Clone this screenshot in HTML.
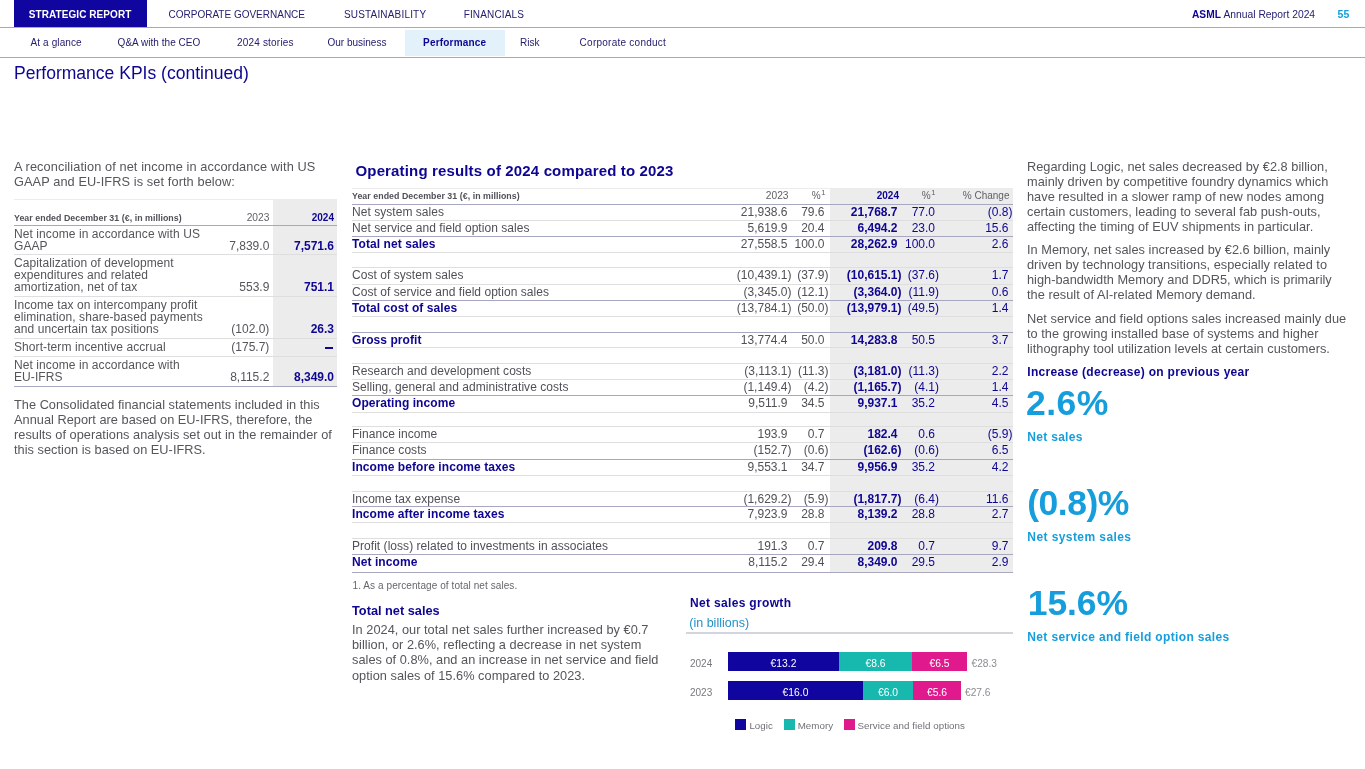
<!DOCTYPE html>
<html><head><meta charset="utf-8"><style>
html,body{margin:0;padding:0;background:#ffffff;}
body{width:1365px;height:769px;position:relative;overflow:hidden;font-family:"Liberation Sans",sans-serif;-webkit-font-smoothing:antialiased;}
#w{position:absolute;left:0;top:0;width:1365px;height:769px;will-change:transform;}
.t{position:absolute;white-space:nowrap;}
.r{position:absolute;}
sup{font-size:7.5px;vertical-align:0;position:relative;top:-4px;margin-left:0.6px;}
</style></head><body><div id="w">
<div class="r" style="left:14px;top:0px;width:133px;height:27px;background:#10069f;"></div>
<div class="t" style="top:8.54px;font-size:10px;line-height:12px;color:#ffffff;font-weight:700;letter-spacing:0.08px;left:28.7px;">STRATEGIC REPORT</div>
<div class="r" style="left:0px;top:27px;width:1365px;height:1px;background:#a8a7c0;"></div>
<div class="t" style="top:8.54px;font-size:10px;line-height:12px;color:#252070;left:168.5px;">CORPORATE GOVERNANCE</div>
<div class="t" style="top:8.54px;font-size:10px;line-height:12px;color:#252070;letter-spacing:0.18px;left:343.90000000000003px;">SUSTAINABILITY</div>
<div class="t" style="top:8.54px;font-size:10px;line-height:12px;color:#252070;letter-spacing:0.15px;left:463.7px;">FINANCIALS</div>
<div class="t" style="top:9.17px;font-size:10.2px;line-height:12px;color:#0e0592;font-weight:700;left:1192px;">ASML</div>
<div class="t" style="top:9.13px;font-size:10.3px;line-height:12px;color:#252070;left:1223.5px;">Annual Report 2024</div>
<div class="t" style="top:7.86px;font-size:10.5px;line-height:13px;color:#159edb;font-weight:700;left:1337.6px;">55</div>
<div class="r" style="left:405px;top:30px;width:100px;height:26px;background:#e3f1fa;"></div>
<div class="t" style="top:36.53px;font-size:10px;line-height:12px;color:#252070;letter-spacing:0.1px;left:30.6px;">At a glance</div>
<div class="t" style="top:36.53px;font-size:10px;line-height:12px;color:#252070;letter-spacing:0.03px;left:117.6px;">Q&amp;A with the CEO</div>
<div class="t" style="top:36.53px;font-size:10px;line-height:12px;color:#252070;letter-spacing:0.2px;left:236.9px;">2024 stories</div>
<div class="t" style="top:36.53px;font-size:10px;line-height:12px;color:#252070;left:327.5px;">Our business</div>
<div class="t" style="top:36.53px;font-size:10px;line-height:12px;color:#0e0592;font-weight:700;letter-spacing:0.18px;left:423.1px;">Performance</div>
<div class="t" style="top:36.53px;font-size:10px;line-height:12px;color:#252070;left:520.0px;">Risk</div>
<div class="t" style="top:36.53px;font-size:10px;line-height:12px;color:#252070;letter-spacing:0.25px;left:579.5999999999999px;">Corporate conduct</div>
<div class="r" style="left:0px;top:57px;width:1365px;height:1px;background:#a8a7c0;"></div>
<div class="t" style="top:63.42px;font-size:17.55px;line-height:21px;color:#0e0592;left:14px;">Performance KPIs (continued)</div>
<div class="t" style="left:14px;top:159.28px;font-size:12.75px;line-height:15px;color:#55555b;letter-spacing:0.1px;">A reconciliation of net income in accordance with US<br>GAAP and EU-IFRS is set forth below:</div>
<div class="r" style="left:273px;top:200px;width:64px;height:186px;background:#ececec;"></div>
<div class="r" style="left:14px;top:199px;width:323px;height:1px;background:#ececec;"></div>
<div class="t" style="top:212.85px;font-size:8.8px;line-height:11px;color:#505058;font-weight:700;letter-spacing:0.05px;left:14px;">Year ended December 31 (€, in millions)</div>
<div class="t" style="top:211.87px;font-size:10.2px;line-height:12px;color:#606068;right:1095.7px;text-align:right;">2023</div>
<div class="t" style="top:211.94px;font-size:10px;line-height:12px;color:#0e0592;font-weight:700;right:1031px;text-align:right;">2024</div>
<div class="r" style="left:14px;top:225px;width:323px;height:1px;background:#a8a7c0;"></div>
<div class="t" style="left:14px;top:227.94px;font-size:12px;line-height:12px;color:#55555b;letter-spacing:0.08px;">Net income in accordance with US<br>GAAP</div>
<div class="t" style="top:238.94px;font-size:12px;line-height:14px;color:#55555b;right:1095.7px;text-align:right;">7,839.0</div>
<div class="t" style="top:238.94px;font-size:12px;line-height:14px;color:#0e0592;font-weight:700;right:1031px;text-align:right;">7,571.6</div>
<div class="r" style="left:14px;top:254px;width:323px;height:1px;background:#dedede;"></div>
<div class="t" style="left:14px;top:256.94px;font-size:12px;line-height:12px;color:#55555b;letter-spacing:0.08px;">Capitalization of development<br>expenditures and related<br>amortization, net of tax</div>
<div class="t" style="top:279.94px;font-size:12px;line-height:14px;color:#55555b;right:1095.7px;text-align:right;">553.9</div>
<div class="t" style="top:279.94px;font-size:12px;line-height:14px;color:#0e0592;font-weight:700;right:1031px;text-align:right;">751.1</div>
<div class="r" style="left:14px;top:296px;width:323px;height:1px;background:#dedede;"></div>
<div class="t" style="left:14px;top:298.94px;font-size:12px;line-height:12px;color:#55555b;letter-spacing:0.08px;">Income tax on intercompany profit<br>elimination, share-based payments<br>and uncertain tax positions</div>
<div class="t" style="top:321.94px;font-size:12px;line-height:14px;color:#55555b;right:1095.7px;text-align:right;">(102.0)</div>
<div class="t" style="top:321.94px;font-size:12px;line-height:14px;color:#0e0592;font-weight:700;right:1031px;text-align:right;">26.3</div>
<div class="r" style="left:14px;top:338px;width:323px;height:1px;background:#dedede;"></div>
<div class="t" style="left:14px;top:340.94px;font-size:12px;line-height:12px;color:#55555b;letter-spacing:0.08px;">Short-term incentive accrual</div>
<div class="t" style="top:339.94px;font-size:12px;line-height:14px;color:#55555b;right:1095.7px;text-align:right;">(175.7)</div>
<div class="r" style="left:324.5px;top:347px;width:8.5px;height:2px;background:#0e0592;"></div>
<div class="r" style="left:14px;top:356px;width:323px;height:1px;background:#dedede;"></div>
<div class="t" style="left:14px;top:358.94px;font-size:12px;line-height:12px;color:#55555b;letter-spacing:0.08px;">Net income in accordance with<br>EU-IFRS</div>
<div class="t" style="top:369.94px;font-size:12px;line-height:14px;color:#55555b;right:1095.7px;text-align:right;">8,115.2</div>
<div class="t" style="top:369.94px;font-size:12px;line-height:14px;color:#0e0592;font-weight:700;right:1031px;text-align:right;">8,349.0</div>
<div class="r" style="left:14px;top:386px;width:323px;height:1px;background:#a8a7c0;"></div>
<div class="t" style="left:14px;top:396.78px;font-size:12.75px;line-height:15px;color:#55555b;letter-spacing:0.03px;">The Consolidated financial statements included in this<br>Annual Report are based on EU-IFRS, therefore, the<br>results of operations analysis set out in the remainder of<br>this section is based on EU-IFRS.</div>
<div class="t" style="top:161.60px;font-size:15px;line-height:18px;color:#0e0592;font-weight:700;letter-spacing:0.15px;left:355.5px;">Operating results of 2024 compared to 2023</div>
<div class="r" style="left:830px;top:188px;width:183px;height:384px;background:#ececec;"></div>
<div class="r" style="left:352px;top:188px;width:661px;height:1px;background:#ececec;"></div>
<div class="t" style="top:190.85px;font-size:8.8px;line-height:11px;color:#505058;font-weight:700;letter-spacing:0.05px;left:352px;">Year ended December 31 (€, in millions)</div>
<div class="t" style="top:189.87px;font-size:10.2px;line-height:12px;color:#606068;right:576.5px;text-align:right;">2023</div>
<div class="t" style="top:189.94px;font-size:10px;line-height:12px;color:#606068;right:539.5px;text-align:right;">%<sup>1</sup></div>
<div class="t" style="top:189.94px;font-size:10px;line-height:12px;color:#0e0592;font-weight:700;right:466px;text-align:right;">2024</div>
<div class="t" style="top:189.94px;font-size:10px;line-height:12px;color:#606068;right:429.5px;text-align:right;">%<sup>1</sup></div>
<div class="t" style="top:189.94px;font-size:10px;line-height:12px;color:#606068;right:355.5px;text-align:right;">% Change</div>
<div class="r" style="left:352px;top:204px;width:661px;height:1px;background:#a8a7c0;"></div>
<div class="t" style="top:204.74px;font-size:12px;line-height:14px;color:#505058;letter-spacing:0.04px;left:352px;">Net system sales</div>
<div class="t" style="top:204.74px;font-size:12px;line-height:14px;color:#505058;right:577.5px;text-align:right;">21,938.6</div>
<div class="t" style="top:204.74px;font-size:12px;line-height:14px;color:#505058;right:540.5px;text-align:right;">79.6</div>
<div class="t" style="top:204.74px;font-size:12px;line-height:14px;color:#0e0592;font-weight:700;right:467.5px;text-align:right;">21,768.7</div>
<div class="t" style="top:204.74px;font-size:12px;line-height:14px;color:#0e0592;right:430px;text-align:right;">77.0</div>
<div class="t" style="top:204.74px;font-size:12px;line-height:14px;color:#0e0592;right:356.5px;text-align:right;">(0.8<span style="position:absolute">)</span></div>
<div class="r" style="left:352px;top:220px;width:661px;height:1px;background:#dedede;"></div>
<div class="t" style="top:220.74px;font-size:12px;line-height:14px;color:#505058;letter-spacing:0.04px;left:352px;">Net service and field option sales</div>
<div class="t" style="top:220.74px;font-size:12px;line-height:14px;color:#505058;right:577.5px;text-align:right;">5,619.9</div>
<div class="t" style="top:220.74px;font-size:12px;line-height:14px;color:#505058;right:540.5px;text-align:right;">20.4</div>
<div class="t" style="top:220.74px;font-size:12px;line-height:14px;color:#0e0592;font-weight:700;right:467.5px;text-align:right;">6,494.2</div>
<div class="t" style="top:220.74px;font-size:12px;line-height:14px;color:#0e0592;right:430px;text-align:right;">23.0</div>
<div class="t" style="top:220.74px;font-size:12px;line-height:14px;color:#0e0592;right:356.5px;text-align:right;">15.6</div>
<div class="r" style="left:352px;top:236px;width:661px;height:1px;background:#a8a7c0;"></div>
<div class="t" style="top:236.74px;font-size:12px;line-height:14px;color:#0e0592;font-weight:700;letter-spacing:0.07px;left:352px;">Total net sales</div>
<div class="t" style="top:236.74px;font-size:12px;line-height:14px;color:#505058;right:577.5px;text-align:right;">27,558.5</div>
<div class="t" style="top:236.74px;font-size:12px;line-height:14px;color:#505058;right:540.5px;text-align:right;">100.0</div>
<div class="t" style="top:236.74px;font-size:12px;line-height:14px;color:#0e0592;font-weight:700;right:467.5px;text-align:right;">28,262.9</div>
<div class="t" style="top:236.74px;font-size:12px;line-height:14px;color:#0e0592;right:430px;text-align:right;">100.0</div>
<div class="t" style="top:236.74px;font-size:12px;line-height:14px;color:#0e0592;right:356.5px;text-align:right;">2.6</div>
<div class="r" style="left:352px;top:252px;width:661px;height:1px;background:#dedede;"></div>
<div class="r" style="left:352px;top:267px;width:661px;height:1px;background:#dedede;"></div>
<div class="t" style="top:267.74px;font-size:12px;line-height:14px;color:#505058;letter-spacing:0.04px;left:352px;">Cost of system sales</div>
<div class="t" style="top:267.74px;font-size:12px;line-height:14px;color:#505058;right:577.5px;text-align:right;">(10,439.1<span style="position:absolute">)</span></div>
<div class="t" style="top:267.74px;font-size:12px;line-height:14px;color:#505058;right:540.5px;text-align:right;">(37.9<span style="position:absolute">)</span></div>
<div class="t" style="top:267.74px;font-size:12px;line-height:14px;color:#0e0592;font-weight:700;right:467.5px;text-align:right;">(10,615.1<span style="position:absolute">)</span></div>
<div class="t" style="top:267.74px;font-size:12px;line-height:14px;color:#0e0592;right:430px;text-align:right;">(37.6<span style="position:absolute">)</span></div>
<div class="t" style="top:267.74px;font-size:12px;line-height:14px;color:#0e0592;right:356.5px;text-align:right;">1.7</div>
<div class="r" style="left:352px;top:284px;width:661px;height:1px;background:#dedede;"></div>
<div class="t" style="top:284.74px;font-size:12px;line-height:14px;color:#505058;letter-spacing:0.04px;left:352px;">Cost of service and field option sales</div>
<div class="t" style="top:284.74px;font-size:12px;line-height:14px;color:#505058;right:577.5px;text-align:right;">(3,345.0<span style="position:absolute">)</span></div>
<div class="t" style="top:284.74px;font-size:12px;line-height:14px;color:#505058;right:540.5px;text-align:right;">(12.1<span style="position:absolute">)</span></div>
<div class="t" style="top:284.74px;font-size:12px;line-height:14px;color:#0e0592;font-weight:700;right:467.5px;text-align:right;">(3,364.0<span style="position:absolute">)</span></div>
<div class="t" style="top:284.74px;font-size:12px;line-height:14px;color:#0e0592;right:430px;text-align:right;">(11.9<span style="position:absolute">)</span></div>
<div class="t" style="top:284.74px;font-size:12px;line-height:14px;color:#0e0592;right:356.5px;text-align:right;">0.6</div>
<div class="r" style="left:352px;top:300px;width:661px;height:1px;background:#a8a7c0;"></div>
<div class="t" style="top:300.74px;font-size:12px;line-height:14px;color:#0e0592;font-weight:700;letter-spacing:0.07px;left:352px;">Total cost of sales</div>
<div class="t" style="top:300.74px;font-size:12px;line-height:14px;color:#505058;right:577.5px;text-align:right;">(13,784.1<span style="position:absolute">)</span></div>
<div class="t" style="top:300.74px;font-size:12px;line-height:14px;color:#505058;right:540.5px;text-align:right;">(50.0<span style="position:absolute">)</span></div>
<div class="t" style="top:300.74px;font-size:12px;line-height:14px;color:#0e0592;font-weight:700;right:467.5px;text-align:right;">(13,979.1<span style="position:absolute">)</span></div>
<div class="t" style="top:300.74px;font-size:12px;line-height:14px;color:#0e0592;right:430px;text-align:right;">(49.5<span style="position:absolute">)</span></div>
<div class="t" style="top:300.74px;font-size:12px;line-height:14px;color:#0e0592;right:356.5px;text-align:right;">1.4</div>
<div class="r" style="left:352px;top:316px;width:661px;height:1px;background:#dedede;"></div>
<div class="r" style="left:352px;top:332px;width:661px;height:1px;background:#a8a7c0;"></div>
<div class="t" style="top:332.74px;font-size:12px;line-height:14px;color:#0e0592;font-weight:700;letter-spacing:0.07px;left:352px;">Gross profit</div>
<div class="t" style="top:332.74px;font-size:12px;line-height:14px;color:#505058;right:577.5px;text-align:right;">13,774.4</div>
<div class="t" style="top:332.74px;font-size:12px;line-height:14px;color:#505058;right:540.5px;text-align:right;">50.0</div>
<div class="t" style="top:332.74px;font-size:12px;line-height:14px;color:#0e0592;font-weight:700;right:467.5px;text-align:right;">14,283.8</div>
<div class="t" style="top:332.74px;font-size:12px;line-height:14px;color:#0e0592;right:430px;text-align:right;">50.5</div>
<div class="t" style="top:332.74px;font-size:12px;line-height:14px;color:#0e0592;right:356.5px;text-align:right;">3.7</div>
<div class="r" style="left:352px;top:347px;width:661px;height:1px;background:#dedede;"></div>
<div class="r" style="left:352px;top:363px;width:661px;height:1px;background:#dedede;"></div>
<div class="t" style="top:363.74px;font-size:12px;line-height:14px;color:#505058;letter-spacing:0.04px;left:352px;">Research and development costs</div>
<div class="t" style="top:363.74px;font-size:12px;line-height:14px;color:#505058;right:577.5px;text-align:right;">(3,113.1<span style="position:absolute">)</span></div>
<div class="t" style="top:363.74px;font-size:12px;line-height:14px;color:#505058;right:540.5px;text-align:right;">(11.3<span style="position:absolute">)</span></div>
<div class="t" style="top:363.74px;font-size:12px;line-height:14px;color:#0e0592;font-weight:700;right:467.5px;text-align:right;">(3,181.0<span style="position:absolute">)</span></div>
<div class="t" style="top:363.74px;font-size:12px;line-height:14px;color:#0e0592;right:430px;text-align:right;">(11.3<span style="position:absolute">)</span></div>
<div class="t" style="top:363.74px;font-size:12px;line-height:14px;color:#0e0592;right:356.5px;text-align:right;">2.2</div>
<div class="r" style="left:352px;top:379px;width:661px;height:1px;background:#dedede;"></div>
<div class="t" style="top:379.74px;font-size:12px;line-height:14px;color:#505058;letter-spacing:0.04px;left:352px;">Selling, general and administrative costs</div>
<div class="t" style="top:379.74px;font-size:12px;line-height:14px;color:#505058;right:577.5px;text-align:right;">(1,149.4<span style="position:absolute">)</span></div>
<div class="t" style="top:379.74px;font-size:12px;line-height:14px;color:#505058;right:540.5px;text-align:right;">(4.2<span style="position:absolute">)</span></div>
<div class="t" style="top:379.74px;font-size:12px;line-height:14px;color:#0e0592;font-weight:700;right:467.5px;text-align:right;">(1,165.7<span style="position:absolute">)</span></div>
<div class="t" style="top:379.74px;font-size:12px;line-height:14px;color:#0e0592;right:430px;text-align:right;">(4.1<span style="position:absolute">)</span></div>
<div class="t" style="top:379.74px;font-size:12px;line-height:14px;color:#0e0592;right:356.5px;text-align:right;">1.4</div>
<div class="r" style="left:352px;top:395px;width:661px;height:1px;background:#a8a7c0;"></div>
<div class="t" style="top:395.74px;font-size:12px;line-height:14px;color:#0e0592;font-weight:700;letter-spacing:0.07px;left:352px;">Operating income</div>
<div class="t" style="top:395.74px;font-size:12px;line-height:14px;color:#505058;right:577.5px;text-align:right;">9,511.9</div>
<div class="t" style="top:395.74px;font-size:12px;line-height:14px;color:#505058;right:540.5px;text-align:right;">34.5</div>
<div class="t" style="top:395.74px;font-size:12px;line-height:14px;color:#0e0592;font-weight:700;right:467.5px;text-align:right;">9,937.1</div>
<div class="t" style="top:395.74px;font-size:12px;line-height:14px;color:#0e0592;right:430px;text-align:right;">35.2</div>
<div class="t" style="top:395.74px;font-size:12px;line-height:14px;color:#0e0592;right:356.5px;text-align:right;">4.5</div>
<div class="r" style="left:352px;top:412px;width:661px;height:1px;background:#dedede;"></div>
<div class="r" style="left:352px;top:426px;width:661px;height:1px;background:#dedede;"></div>
<div class="t" style="top:426.74px;font-size:12px;line-height:14px;color:#505058;letter-spacing:0.04px;left:352px;">Finance income</div>
<div class="t" style="top:426.74px;font-size:12px;line-height:14px;color:#505058;right:577.5px;text-align:right;">193.9</div>
<div class="t" style="top:426.74px;font-size:12px;line-height:14px;color:#505058;right:540.5px;text-align:right;">0.7</div>
<div class="t" style="top:426.74px;font-size:12px;line-height:14px;color:#0e0592;font-weight:700;right:467.5px;text-align:right;">182.4</div>
<div class="t" style="top:426.74px;font-size:12px;line-height:14px;color:#0e0592;right:430px;text-align:right;">0.6</div>
<div class="t" style="top:426.74px;font-size:12px;line-height:14px;color:#0e0592;right:356.5px;text-align:right;">(5.9<span style="position:absolute">)</span></div>
<div class="r" style="left:352px;top:442px;width:661px;height:1px;background:#dedede;"></div>
<div class="t" style="top:442.74px;font-size:12px;line-height:14px;color:#505058;letter-spacing:0.04px;left:352px;">Finance costs</div>
<div class="t" style="top:442.74px;font-size:12px;line-height:14px;color:#505058;right:577.5px;text-align:right;">(152.7<span style="position:absolute">)</span></div>
<div class="t" style="top:442.74px;font-size:12px;line-height:14px;color:#505058;right:540.5px;text-align:right;">(0.6<span style="position:absolute">)</span></div>
<div class="t" style="top:442.74px;font-size:12px;line-height:14px;color:#0e0592;font-weight:700;right:467.5px;text-align:right;">(162.6<span style="position:absolute">)</span></div>
<div class="t" style="top:442.74px;font-size:12px;line-height:14px;color:#0e0592;right:430px;text-align:right;">(0.6<span style="position:absolute">)</span></div>
<div class="t" style="top:442.74px;font-size:12px;line-height:14px;color:#0e0592;right:356.5px;text-align:right;">6.5</div>
<div class="r" style="left:352px;top:459px;width:661px;height:1px;background:#a8a7c0;"></div>
<div class="t" style="top:459.74px;font-size:12px;line-height:14px;color:#0e0592;font-weight:700;letter-spacing:0.07px;left:352px;">Income before income taxes</div>
<div class="t" style="top:459.74px;font-size:12px;line-height:14px;color:#505058;right:577.5px;text-align:right;">9,553.1</div>
<div class="t" style="top:459.74px;font-size:12px;line-height:14px;color:#505058;right:540.5px;text-align:right;">34.7</div>
<div class="t" style="top:459.74px;font-size:12px;line-height:14px;color:#0e0592;font-weight:700;right:467.5px;text-align:right;">9,956.9</div>
<div class="t" style="top:459.74px;font-size:12px;line-height:14px;color:#0e0592;right:430px;text-align:right;">35.2</div>
<div class="t" style="top:459.74px;font-size:12px;line-height:14px;color:#0e0592;right:356.5px;text-align:right;">4.2</div>
<div class="r" style="left:352px;top:475px;width:661px;height:1px;background:#dedede;"></div>
<div class="r" style="left:352px;top:491px;width:661px;height:1px;background:#dedede;"></div>
<div class="t" style="top:491.74px;font-size:12px;line-height:14px;color:#505058;letter-spacing:0.04px;left:352px;">Income tax expense</div>
<div class="t" style="top:491.74px;font-size:12px;line-height:14px;color:#505058;right:577.5px;text-align:right;">(1,629.2<span style="position:absolute">)</span></div>
<div class="t" style="top:491.74px;font-size:12px;line-height:14px;color:#505058;right:540.5px;text-align:right;">(5.9<span style="position:absolute">)</span></div>
<div class="t" style="top:491.74px;font-size:12px;line-height:14px;color:#0e0592;font-weight:700;right:467.5px;text-align:right;">(1,817.7<span style="position:absolute">)</span></div>
<div class="t" style="top:491.74px;font-size:12px;line-height:14px;color:#0e0592;right:430px;text-align:right;">(6.4<span style="position:absolute">)</span></div>
<div class="t" style="top:491.74px;font-size:12px;line-height:14px;color:#0e0592;right:356.5px;text-align:right;">11.6</div>
<div class="r" style="left:352px;top:506px;width:661px;height:1px;background:#a8a7c0;"></div>
<div class="t" style="top:506.74px;font-size:12px;line-height:14px;color:#0e0592;font-weight:700;letter-spacing:0.07px;left:352px;">Income after income taxes</div>
<div class="t" style="top:506.74px;font-size:12px;line-height:14px;color:#505058;right:577.5px;text-align:right;">7,923.9</div>
<div class="t" style="top:506.74px;font-size:12px;line-height:14px;color:#505058;right:540.5px;text-align:right;">28.8</div>
<div class="t" style="top:506.74px;font-size:12px;line-height:14px;color:#0e0592;font-weight:700;right:467.5px;text-align:right;">8,139.2</div>
<div class="t" style="top:506.74px;font-size:12px;line-height:14px;color:#0e0592;right:430px;text-align:right;">28.8</div>
<div class="t" style="top:506.74px;font-size:12px;line-height:14px;color:#0e0592;right:356.5px;text-align:right;">2.7</div>
<div class="r" style="left:352px;top:522px;width:661px;height:1px;background:#dedede;"></div>
<div class="r" style="left:352px;top:538px;width:661px;height:1px;background:#dedede;"></div>
<div class="t" style="top:538.74px;font-size:12px;line-height:14px;color:#505058;letter-spacing:0.04px;left:352px;">Profit (loss) related to investments in associates</div>
<div class="t" style="top:538.74px;font-size:12px;line-height:14px;color:#505058;right:577.5px;text-align:right;">191.3</div>
<div class="t" style="top:538.74px;font-size:12px;line-height:14px;color:#505058;right:540.5px;text-align:right;">0.7</div>
<div class="t" style="top:538.74px;font-size:12px;line-height:14px;color:#0e0592;font-weight:700;right:467.5px;text-align:right;">209.8</div>
<div class="t" style="top:538.74px;font-size:12px;line-height:14px;color:#0e0592;right:430px;text-align:right;">0.7</div>
<div class="t" style="top:538.74px;font-size:12px;line-height:14px;color:#0e0592;right:356.5px;text-align:right;">9.7</div>
<div class="r" style="left:352px;top:554px;width:661px;height:1px;background:#a8a7c0;"></div>
<div class="t" style="top:555.34px;font-size:12px;line-height:14px;color:#0e0592;font-weight:700;letter-spacing:0.07px;left:352px;">Net income</div>
<div class="t" style="top:555.34px;font-size:12px;line-height:14px;color:#505058;right:577.5px;text-align:right;">8,115.2</div>
<div class="t" style="top:555.34px;font-size:12px;line-height:14px;color:#505058;right:540.5px;text-align:right;">29.4</div>
<div class="t" style="top:555.34px;font-size:12px;line-height:14px;color:#0e0592;font-weight:700;right:467.5px;text-align:right;">8,349.0</div>
<div class="t" style="top:555.34px;font-size:12px;line-height:14px;color:#0e0592;right:430px;text-align:right;">29.5</div>
<div class="t" style="top:555.34px;font-size:12px;line-height:14px;color:#0e0592;right:356.5px;text-align:right;">2.9</div>
<div class="r" style="left:352px;top:572px;width:661px;height:1px;background:#a8a7c0;"></div>
<div class="t" style="top:579.93px;font-size:10px;line-height:12px;color:#66666c;letter-spacing:0.08px;left:352.5px;">1. As a percentage of total net sales.</div>
<div class="t" style="top:603.18px;font-size:12.75px;line-height:15px;color:#0e0592;font-weight:700;left:352px;">Total net sales</div>
<div class="t" style="left:352px;top:621.98px;font-size:12.75px;line-height:15.2px;color:#55555b;letter-spacing:0.03px;">In 2024, our total net sales further increased by €0.7<br>billion, or 2.6%, reflecting a decrease in net system<br>sales of 0.8%, and an increase in net service and field<br>option sales of 15.6% compared to 2023.</div>
<div class="t" style="top:596.24px;font-size:12px;line-height:14px;color:#0e0592;font-weight:700;letter-spacing:0.33px;left:690px;">Net sales growth</div>
<div class="t" style="top:615.77px;font-size:12.5px;line-height:15px;color:#2490c8;left:689.3px;">(in billions)</div>
<div class="r" style="left:686px;top:632px;width:327px;height:2px;background:#d4d4de;"></div>
<div class="t" style="top:658.13px;font-size:10px;line-height:12px;color:#78787e;left:690px;">2024</div>
<div class="t" style="top:686.83px;font-size:10px;line-height:12px;color:#78787e;left:690px;">2023</div>
<div class="r" style="left:728px;top:652px;width:111px;height:19px;background:#10069f;"></div>
<div class="r" style="left:839px;top:652px;width:73px;height:19px;background:#17b8ae;"></div>
<div class="r" style="left:912px;top:652px;width:55px;height:19px;background:#e0198c;"></div>
<div class="r" style="left:728px;top:681px;width:135px;height:19px;background:#10069f;"></div>
<div class="r" style="left:863px;top:681px;width:50px;height:19px;background:#17b8ae;"></div>
<div class="r" style="left:913px;top:681px;width:48px;height:19px;background:#e0198c;"></div>
<div class="t" style="top:657.63px;font-size:10.3px;line-height:12px;color:#ffffff;left:583.5px;width:400px;text-align:center;">€13.2</div>
<div class="t" style="top:657.63px;font-size:10.3px;line-height:12px;color:#ffffff;left:675.5px;width:400px;text-align:center;">€8.6</div>
<div class="t" style="top:657.63px;font-size:10.3px;line-height:12px;color:#ffffff;left:739.5px;width:400px;text-align:center;">€6.5</div>
<div class="t" style="top:686.63px;font-size:10.3px;line-height:12px;color:#ffffff;left:595.5px;width:400px;text-align:center;">€16.0</div>
<div class="t" style="top:686.63px;font-size:10.3px;line-height:12px;color:#ffffff;left:688px;width:400px;text-align:center;">€6.0</div>
<div class="t" style="top:686.63px;font-size:10.3px;line-height:12px;color:#ffffff;left:737px;width:400px;text-align:center;">€5.6</div>
<div class="t" style="top:657.67px;font-size:10.2px;line-height:12px;color:#8c8c92;left:971.5px;">€28.3</div>
<div class="t" style="top:686.67px;font-size:10.2px;line-height:12px;color:#8c8c92;left:965px;">€27.6</div>
<div class="r" style="left:735px;top:719px;width:10.5px;height:11px;background:#10069f;"></div>
<div class="r" style="left:784px;top:719px;width:10.5px;height:11px;background:#17b8ae;"></div>
<div class="r" style="left:844px;top:719px;width:10.5px;height:11px;background:#e0198c;"></div>
<div class="t" style="top:719.92px;font-size:9.75px;line-height:12px;color:#707078;letter-spacing:0.05px;left:749.4px;">Logic</div>
<div class="t" style="top:719.92px;font-size:9.75px;line-height:12px;color:#707078;letter-spacing:0.05px;left:797.7px;">Memory</div>
<div class="t" style="top:719.92px;font-size:9.75px;line-height:12px;color:#707078;letter-spacing:0.05px;left:857.5px;">Service and field options</div>
<div class="t" style="left:1027px;top:158.68px;font-size:12.75px;line-height:15px;color:#55555b;letter-spacing:0.03px;">Regarding Logic, net sales decreased by €2.8 billion,<br>mainly driven by competitive foundry dynamics which<br>have resulted in a slower ramp of new nodes among<br>certain customers, leading to several fab push-outs,<br>affecting the timing of EUV shipments in particular.</div>
<div class="t" style="left:1027px;top:242.18px;font-size:12.75px;line-height:15px;color:#55555b;letter-spacing:0.03px;">In Memory, net sales increased by €2.6 billion, mainly<br>driven by technology transitions, especially related to<br>high-bandwidth Memory and DDR5, which is primarily<br>the result of AI-related Memory demand.</div>
<div class="t" style="left:1027px;top:311.08px;font-size:12.75px;line-height:15px;color:#55555b;letter-spacing:0.03px;">Net service and field options sales increased mainly due<br>to the growing installed base of systems and higher<br>lithography tool utilization levels at certain customers.</div>
<div class="t" style="top:365.04px;font-size:12px;line-height:14px;color:#0e0592;font-weight:700;letter-spacing:0.3px;left:1027.3px;">Increase (decrease) on previous year</div>
<div class="t" style="top:381.60px;font-size:35.5px;line-height:43px;color:#159edb;font-weight:700;letter-spacing:0.5px;left:1026px;">2.6%</div>
<div class="t" style="top:429.84px;font-size:12px;line-height:14px;color:#159edb;font-weight:700;letter-spacing:0.3px;left:1027.3px;">Net sales</div>
<div class="t" style="top:481.80px;font-size:35.5px;line-height:43px;color:#159edb;font-weight:700;letter-spacing:-0.5px;left:1027.3px;">(0.8)%</div>
<div class="t" style="top:529.84px;font-size:12px;line-height:14px;color:#159edb;font-weight:700;letter-spacing:0.42px;left:1027.3px;">Net system sales</div>
<div class="t" style="top:582.20px;font-size:35.5px;line-height:43px;color:#159edb;font-weight:700;letter-spacing:-0.1px;left:1027.8px;">15.6%</div>
<div class="t" style="top:629.84px;font-size:12px;line-height:14px;color:#159edb;font-weight:700;letter-spacing:0.36px;left:1027.3px;">Net service and field option sales</div>
</div></body></html>
